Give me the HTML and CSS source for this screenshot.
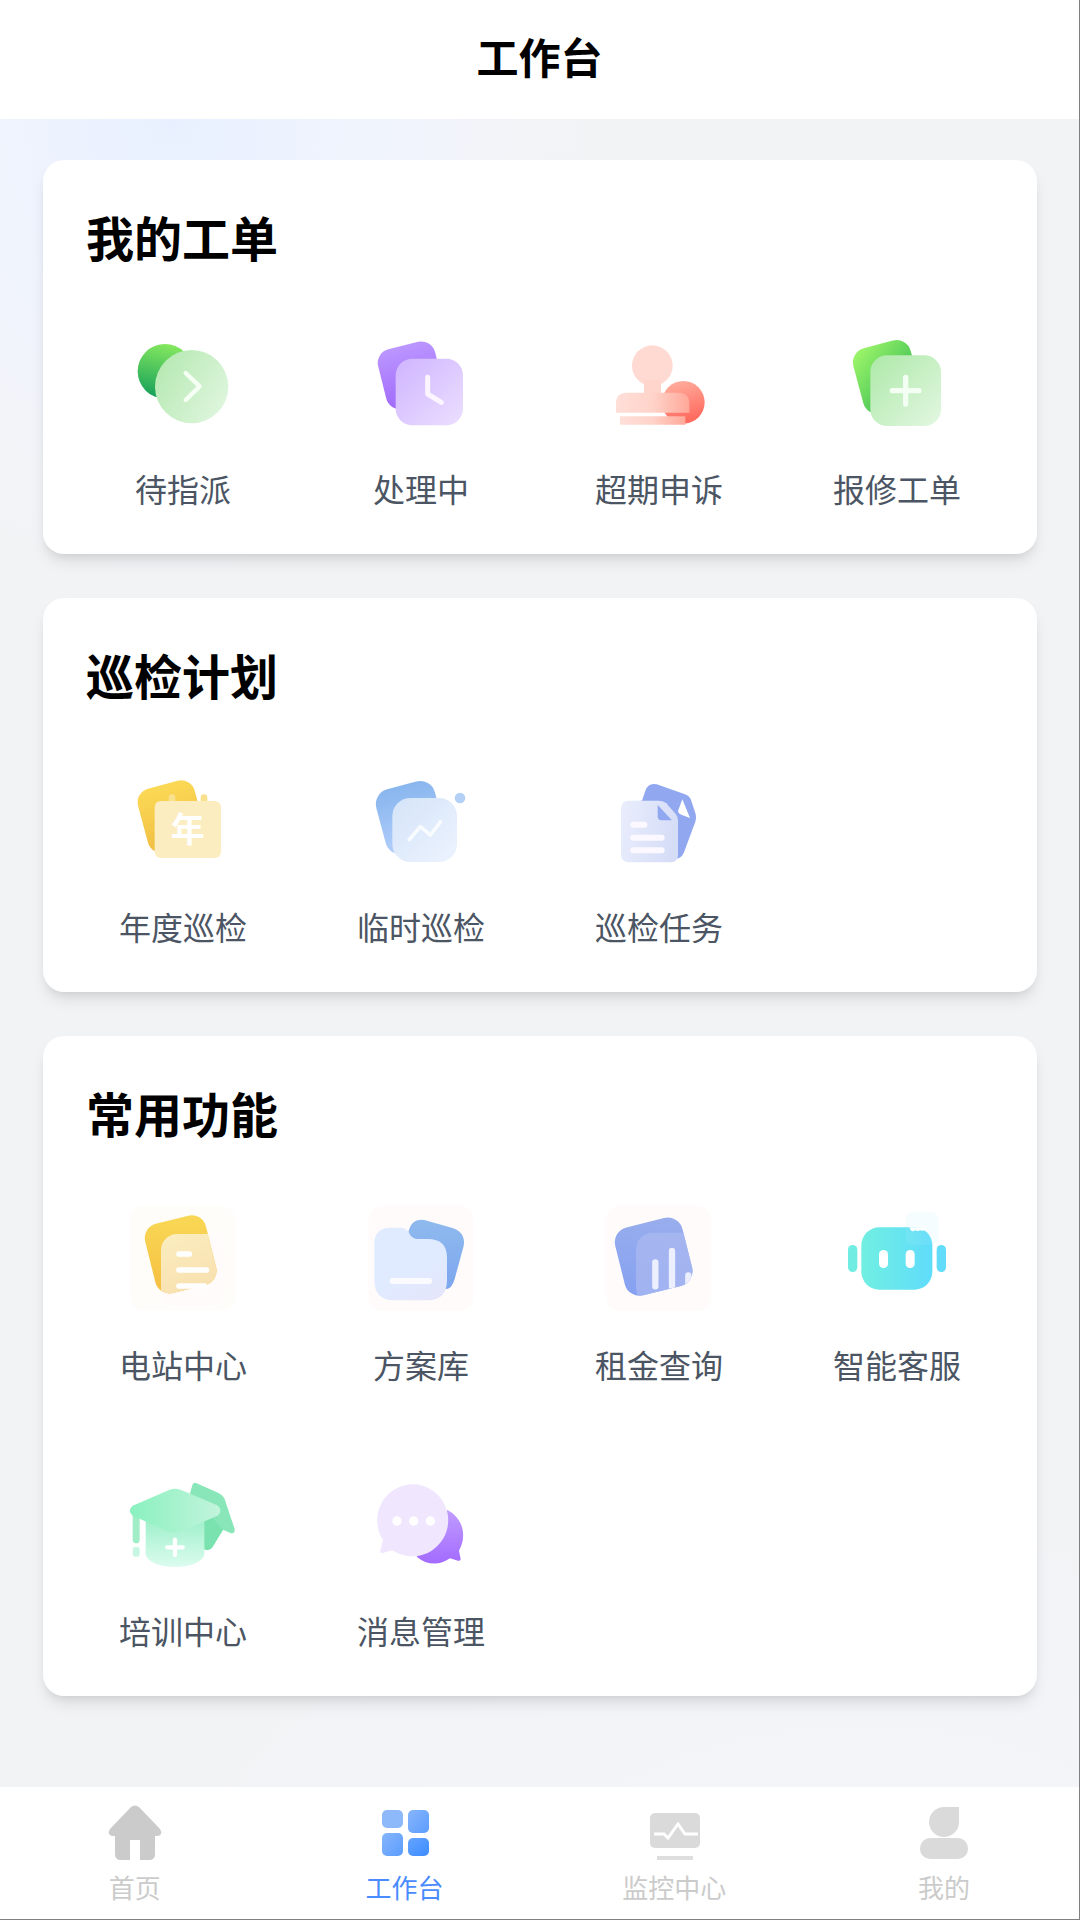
FILE: index.html
```html
<!DOCTYPE html>
<html lang="zh-CN">
<head>
<meta charset="utf-8">
<meta name="viewport" content="width=device-width, initial-scale=1">
<title>工作台</title>
<link rel="stylesheet" href="styles.css">
</head>
<body>
<div class="app">
  <header class="topbar"><h1 class="topbar-title">工作台</h1></header>

  <main class="content">
    <section class="card">
      <h2 class="card-title">我的工单</h2>
      <div class="grid">
        <a class="item" href="#assign">
          <svg class="item-icon" viewBox="57 24 324 324" aria-hidden="true">
            <defs>
              <linearGradient id="a1" x1=".6" y1="0" x2=".4" y2="1"><stop stop-color="#86e95f"/><stop offset="1" stop-color="#16a05a"/></linearGradient>
              <linearGradient id="a2" x1="0" y1=".2" x2="1" y2=".8"><stop stop-color="#b5e9b1"/><stop offset="1" stop-color="#e0f6df"/></linearGradient>
            </defs>
            <circle cx="165" cy="154" r="82" fill="url(#a1)"/>
            <circle cx="245" cy="200" r="110" fill="url(#a2)"/>
            <path d="M227 159l42 40-42 41" fill="none" stroke="#f6fff4" stroke-width="13" stroke-linecap="round" stroke-linejoin="round"/>
          </svg>
          <span class="item-label">待指派</span>
        </a>
        <a class="item" href="#processing">
          <svg class="item-icon" viewBox="771 24 324 324" aria-hidden="true">
            <defs>
              <linearGradient id="b1" x1="0" y1="0" x2="0" y2="1"><stop stop-color="#bb96ff"/><stop offset="1" stop-color="#a069fb"/></linearGradient>
              <linearGradient id="b2" x1="0" y1="0" x2="1" y2="1"><stop stop-color="#cfb4ff"/><stop offset="1" stop-color="#ecdfff"/></linearGradient>
            </defs>
            <rect x="814" y="74" width="176" height="184" rx="42" fill="url(#b1)" transform="rotate(-14 902 166)"/>
            <rect x="857" y="116" width="202" height="200" rx="50" fill="url(#b2)"/>
            <path d="M953 172v50l41 25" fill="none" stroke="#fbf5ff" stroke-width="15" stroke-linecap="round" stroke-linejoin="round"/>
          </svg>
          <span class="item-label">处理中</span>
        </a>
        <a class="item" href="#appeal">
          <svg class="item-icon" viewBox="45 24 324 324" aria-hidden="true">
            <defs>
              <linearGradient id="c1" x1="0" y1="0" x2=".3" y2="1"><stop stop-color="#ffb4a4"/><stop offset="1" stop-color="#ff6c60"/></linearGradient>
              <linearGradient id="c2" x1="0" y1="0" x2="1" y2="0"><stop stop-color="#ffdfd9"/><stop offset=".5" stop-color="#ffd3c9"/><stop offset="1" stop-color="#ffa899"/></linearGradient>
            </defs>
            <circle cx="280" cy="247" r="64" fill="url(#c1)"/>
            <path d="M90 278h128l6 10H90z" fill="#fff"/>
            <circle cx="187" cy="137" r="61" fill="#ffdad3"/>
            <path d="M162 180h51v42h-51z" fill="#ffd5cc"/>
            <path d="M78 278v-28q0-32 32-32h156q32 0 32 32v28z" fill="url(#c2)"/>
            <path d="M90 289h196v25H90z" fill="url(#c2)"/>
          </svg>
          <span class="item-label">超期申诉</span>
        </a>
        <a class="item" href="#repair">
          <svg class="item-icon" viewBox="759 24 324 324" aria-hidden="true">
            <defs>
              <linearGradient id="d1" x1=".1" y1=".1" x2=".7" y2="1"><stop stop-color="#97f268"/><stop offset="1" stop-color="#2db552"/></linearGradient>
              <linearGradient id="d2" x1="0" y1="0" x2="1" y2="1"><stop stop-color="#ade9a8"/><stop offset="1" stop-color="#e3f7e2"/></linearGradient>
            </defs>
            <rect x="802" y="70" width="178" height="202" rx="44" fill="url(#d1)" transform="rotate(-15 891 171)"/>
            <rect x="841" y="106" width="212" height="212" rx="50" fill="url(#d2)"/>
            <path d="M947 172v80M907 212h80" fill="none" stroke="#f3fff2" stroke-width="16" stroke-linecap="round"/>
          </svg>
          <span class="item-label">报修工单</span>
        </a>
      </div>
    </section>

    <section class="card">
      <h2 class="card-title">巡检计划</h2>
      <div class="grid">
        <a class="item" href="#yearly">
          <svg class="item-icon" viewBox="57 18 324 324" aria-hidden="true">
            <defs><linearGradient id="e1" x1="0" y1="0" x2="0" y2="1"><stop stop-color="#fbd955"/><stop offset="1" stop-color="#f0bd42"/></linearGradient></defs>
            <rect x="96" y="71" width="176" height="198" rx="42" fill="url(#e1)" transform="rotate(-15 184 170)"/>
            <path d="M176 125v-12a10 10 0 0 1 20 0v12zM272 125v-12a10 10 0 0 1 20 0v12z" fill="#f8e08c"/>
            <rect x="134" y="123" width="199" height="171" rx="18" fill="#fcedc1"/>
            <text class="year-mark" x="233" y="247">年</text>
          </svg>
          <span class="item-label">年度巡检</span>
        </a>
        <a class="item" href="#temporary">
          <svg class="item-icon" viewBox="771 18 324 324" aria-hidden="true">
            <defs>
              <linearGradient id="f1" x1="0" y1="0" x2="0" y2="1"><stop stop-color="#88b6ee"/><stop offset="1" stop-color="#b3cffb"/></linearGradient>
              <linearGradient id="f2" x1="0" y1="0" x2="1" y2="1"><stop stop-color="#d4e4f8"/><stop offset="1" stop-color="#edf3ff"/></linearGradient>
            </defs>
            <rect x="810" y="73" width="182" height="200" rx="46" fill="url(#f1)" transform="rotate(-15 901 173)"/>
            <rect x="847" y="114" width="194" height="192" rx="54" fill="url(#f2)"/>
            <path d="M898 239l33-39 30 25 31-40" fill="none" stroke="#f8fcff" stroke-width="11" stroke-linecap="round" stroke-linejoin="round"/>
            <circle cx="1050" cy="114" r="16" fill="#b4d0f7"/>
          </svg>
          <span class="item-label">临时巡检</span>
        </a>
        <a class="item" href="#tasks">
          <svg class="item-icon" viewBox="45 18 324 324" aria-hidden="true">
            <defs><linearGradient id="g1" x1="0" y1=".4" x2="1" y2=".6"><stop stop-color="#e8ecfc"/><stop offset="1" stop-color="#d4dcf6"/></linearGradient></defs>
            <path d="M156 122l10-30q9-25 34-19l85 30q12 4 17 14l15 45q3 12-1 23l-34 92q-8 20-24 18l-60-60-50-113z" fill="#91a8f0"/>
            <path d="M277 118l23 56-26-10q-12-4-9-14z" fill="#fff"/>
            <path d="M117 122h90q14 0 22 8l28 32q7 8 7 20v103q0 22-22 22H117q-24 0-24-24V146q0-24 24-24z" fill="url(#g1)"/>
            <path d="M203 135l43 46h-31q-12 0-12-12z" fill="#91a8f0"/>
            <path d="M130 194h33M130 233h85M130 271h85" stroke="#fbf9ff" stroke-width="18" stroke-linecap="round"/>
          </svg>
          <span class="item-label">巡检任务</span>
        </a>
      </div>
    </section>

    <section class="card">
      <h2 class="card-title">常用功能</h2>
      <div class="grid">
        <a class="item" href="#stations">
          <svg class="item-icon" viewBox="57 42 324 324" aria-hidden="true">
            <defs>
              <linearGradient id="h1" x1="0" y1="0" x2="0" y2="1"><stop stop-color="#f9db58"/><stop offset="1" stop-color="#f5b93c"/></linearGradient>
              <linearGradient id="h2" x1="0" y1="0" x2=".4" y2="1"><stop stop-color="#fbeebf"/><stop offset="1" stop-color="#f8deae"/></linearGradient>
              <clipPath id="h3"><rect x="118" y="86" width="188" height="214" rx="44" transform="rotate(-14 212 193)"/></clipPath>
            </defs>
            <rect x="60" y="47" width="316" height="316" rx="44" fill="#fffdf9"/>
            <rect x="153" y="132" width="191" height="214" rx="48" fill="#fefbfa"/>
            <g clip-path="url(#h3)">
              <path d="M60 47h316v316H60z" fill="url(#h1)"/>
              <rect x="153" y="132" width="191" height="214" rx="48" fill="url(#h2)"/>
            </g>
            <path d="M207 192h31M207 240h82M207 288h76" stroke="#fff" stroke-width="17" stroke-linecap="round"/>
          </svg>
          <span class="item-label">电站中心</span>
        </a>
        <a class="item" href="#plans">
          <svg class="item-icon" viewBox="771 42 324 324" aria-hidden="true">
            <defs>
              <linearGradient id="i1" x1="0" y1="0" x2="0" y2="1"><stop stop-color="#8fbaee"/><stop offset="1" stop-color="#7ca6ee"/></linearGradient>
              <linearGradient id="i2" x1=".5" y1=".6" x2=".8" y2="1.2"><stop stop-color="#e0ebff"/><stop offset="1" stop-color="#e6e3fa"/></linearGradient>
            </defs>
            <rect x="775" y="47" width="316" height="316" rx="44" fill="#fffbfa"/>
            <path d="M895 128q8-43 48-38l82 23q43 13 36 55l-27 99q-8 30-28 31l-60-50z" fill="url(#i1)"/>
            <path d="M842 113h30q15 0 23 12l6 11q8 11 22 11h30q58 0 58 56v68q0 60-58 60H852q-59 0-59-60V162q0-49 49-49z" fill="url(#i2)"/>
            <path d="M848 273h109" stroke="#fafaff" stroke-width="18" stroke-linecap="round"/>
          </svg>
          <span class="item-label">方案库</span>
        </a>
        <a class="item" href="#rent">
          <svg class="item-icon" viewBox="45 42 324 324" aria-hidden="true">
            <defs>
              <linearGradient id="j1" x1=".5" y1="0" x2=".4" y2="1"><stop stop-color="#9aafec"/><stop offset="1" stop-color="#839ff2"/></linearGradient>
              <clipPath id="j2"><rect x="87" y="95" width="208" height="210" rx="46" transform="rotate(-14 191 200)"/></clipPath>
            </defs>
            <rect x="48" y="47" width="316" height="316" rx="44" fill="#fffbfa"/>
            <g clip-path="url(#j2)">
              <path d="M48 47h316v316H48z" fill="url(#j1)"/>
              <rect x="138" y="128" width="216" height="216" rx="50" fill="#aab8f0" opacity=".75"/>
              <path d="M196 217v72M246 183v106M295 256v32" stroke="#eceffe" stroke-width="19" stroke-linecap="round"/>
            </g>
          </svg>
          <span class="item-label">租金查询</span>
        </a>
        <a class="item" href="#service">
          <svg class="item-icon" viewBox="759 42 324 324" aria-hidden="true">
            <defs><linearGradient id="k1" x1="0" y1="0" x2="1" y2="0"><stop stop-color="#71efe1"/><stop offset="1" stop-color="#5fdcfb"/></linearGradient></defs>
            <rect x="774" y="165" width="28" height="81" rx="14" fill="#70ece2"/>
            <rect x="1040" y="165" width="28" height="81" rx="14" fill="#62dcf8"/>
            <rect x="947" y="66" width="98" height="98" rx="22" fill="#f5fdff"/>
            <rect x="814" y="112" width="213" height="187" rx="54" fill="url(#k1)"/>
            <path d="M947 112h26q54 0 54 52h-58q-22 0-22-22z" fill="#fff" opacity=".08"/>
            <path d="M958 112h48q0 12-10 10-6-2-9 0-9 2-11-2-8 8-14 0z" fill="#fbffff"/>
            <rect x="867" y="180" width="27" height="54" rx="13" fill="#fff"/>
            <rect x="947" y="180" width="27" height="54" rx="13" fill="#fff"/>
          </svg>
          <span class="item-label">智能客服</span>
        </a>
        <a class="item" href="#training">
          <svg class="item-icon" viewBox="57 30 324 324" aria-hidden="true">
            <defs>
              <linearGradient id="l1" x1="0" y1="0" x2="1" y2="0"><stop stop-color="#8af1bf"/><stop offset="1" stop-color="#c2f4dc"/></linearGradient>
              <linearGradient id="l2" x1="0" y1="0" x2="0" y2="1"><stop stop-color="#9aefc8"/><stop offset="1" stop-color="#dcfcef"/></linearGradient>
            </defs>
            <path d="M240 100l8-27q3-6 10-4l66 29q12 5 19 17l31 92q1 16-13 12l-22-10-32 53q-8 12-25 6v-90z" fill="#88e6b8"/>
            <path d="M283 180l25-5 31 34-32 53q-8 12-24 6z" fill="#79e2af"/>
            <path d="M107 170h176v115c-15 48-161 48-176 0z" fill="url(#l2)"/>
            <path d="M68 160h21v79q0 11-10 11t-11-11z" fill="#a0edc8"/>
            <rect x="68" y="261" width="21" height="29" rx="9" fill="#c7f7e2"/>
            <path d="M68 137l111-48q17-6 33 0l110 47q17 13 3 30l-107 47q-24 10-46 0L68 167q-17-15 0-30z" fill="url(#l1)"/>
            <path d="M195 239v46M172 262h46" stroke="#fff" stroke-width="13" stroke-linecap="round"/>
          </svg>
          <span class="item-label">培训中心</span>
        </a>
        <a class="item" href="#messages">
          <svg class="item-icon" viewBox="771 30 324 324" aria-hidden="true">
            <defs><linearGradient id="m1" x1="0" y1="0" x2="0" y2="1"><stop stop-color="#c09cff"/><stop offset="1" stop-color="#a36bff"/></linearGradient></defs>
            <path d="M1012 150c47 24 60 78 35 122l5 25q0 7-8 5l-24-7c-33 23-70 20-100-5z" fill="url(#m1)"/>
            <path d="M910 73a108 108 0 1 1-63 198l-29 8q-9 1-7-8l8-31A108 108 0 0 1 910 73z" fill="#f0e7ff"/>
            <g fill="#fff"><circle cx="861" cy="183" r="14"/><circle cx="911" cy="183" r="14"/><circle cx="961" cy="183" r="14"/></g>
          </svg>
          <span class="item-label">消息管理</span>
        </a>
      </div>
    </section>
  </main>

  <nav class="tabbar" aria-label="主导航">
    <a class="tab" href="#home">
      <svg class="tab-icon" viewBox="0 0 60 60" aria-hidden="true"><path d="M26 4q4-3 8 0l21 22q2 3 1 5-1 2-4 2h-2v18q0 6-6 6h-9V37H25v20h-9q-6 0-6-6V33H8q-3 0-4-2-1-2 1-5z" fill="#cbcbcb"/></svg>
      <span>首页</span>
    </a>
    <a class="tab tab-active" href="#workbench" aria-current="page">
      <svg class="tab-icon" viewBox="0 0 60 60" aria-hidden="true">
        <defs>
          <linearGradient id="n1" x1="0" y1="0" x2="1" y2="1"><stop stop-color="#87b5fa"/><stop offset="1" stop-color="#5b9dff"/></linearGradient>
          <linearGradient id="n2" x1="0" y1="0" x2="1" y2="1"><stop stop-color="#64a5ff"/><stop offset="1" stop-color="#3d8bff"/></linearGradient>
        </defs>
        <rect x="7" y="7" width="21" height="18" rx="5" fill="#8db8fa"/>
        <rect x="33" y="7" width="21" height="23" rx="5" fill="url(#n1)"/>
        <rect x="7" y="30" width="21" height="23" rx="5" fill="url(#n1)"/>
        <rect x="33" y="35" width="21" height="18" rx="5" fill="url(#n2)"/>
      </svg>
      <span>工作台</span>
    </a>
    <a class="tab" href="#monitor">
      <svg class="tab-icon" viewBox="0 0 60 60" aria-hidden="true">
        <rect x="6" y="10" width="50" height="35" rx="5" fill="#dadada"/>
        <path d="M10 31h10l4 4 10-14 7 10h13" fill="none" stroke="#fff" stroke-width="3"/>
        <path d="M13 55h36" stroke="#dedede" stroke-width="4"/>
      </svg>
      <span>监控中心</span>
    </a>
    <a class="tab" href="#me">
      <svg class="tab-icon" viewBox="0 0 60 60" aria-hidden="true" fill="#dadada">
        <path d="M30 4h15v14a15 15 0 1 1-15-14z"/>
        <rect x="6" y="35" width="48" height="21" rx="10"/>
      </svg>
      <span>我的</span>
    </a>
  </nav>
</div>
</body>
</html>
```
FILE: styles.css
```css
* {
  box-sizing: border-box;
}

body {
  margin: 0;
  font-family: "Noto Sans CJK SC", sans-serif;
  color: #000;
}

.app {
  display: flex;
  flex-direction: column;
  min-height: 100vh;
  border-right: 1px solid #808080;
  border-bottom: 1px solid #808080;
  background:
    radial-gradient(ellipse 420px 460px at 16% 120px, #e8f0ff 0%, #f0f4fd 45%, rgba(242, 243, 245, 0) 100%),
    radial-gradient(ellipse 700px 400px at 80% 100%, #f4f6fb 0%, rgba(242, 243, 245, 0) 100%),
    #f2f3f5;
}

.topbar {
  padding: 24px 0 31px;
  background: #fff;
  text-align: center;
}

.topbar-title {
  margin: 0;
  font-size: 42px;
  font-weight: 700;
  line-height: 64px;
}

.content {
  display: flex;
  flex: 1;
  flex-direction: column;
  gap: 44px;
  padding: 41px 42px 44px 43px;
}

.card {
  padding: 40px 21px 0;
  border-radius: 21px;
  background: #fff;
  box-shadow:
    0 10px 16px -3px rgba(0, 0, 0, 0.1),
    0 5px 10px -5px rgba(0, 0, 0, 0.1);
}

.card-title {
  margin: 0 0 16px;
  padding: 0 22px;
  font-size: 48px;
  font-weight: 700;
  line-height: 72px;
}

.grid {
  display: grid;
  grid-template-columns: repeat(4, 1fr);
}

.item {
  display: flex;
  flex-direction: column;
  align-items: center;
  gap: 28px;
  padding: 40px 0 42px;
  color: #4b5563;
  text-decoration: none;
}

.item-icon {
  width: 108px;
  height: 108px;
}

.item-label {
  font-size: 32px;
  line-height: 48px;
}

.year-mark {
  font-size: 102px;
  font-weight: 700;
  text-anchor: middle;
  fill: #fff;
}

.tabbar {
  display: grid;
  grid-template-columns: repeat(4, 1fr);
  background: #fff;
}

.tab {
  display: flex;
  flex-direction: column;
  align-items: center;
  gap: 6px;
  padding: 16px 0 14px;
  color: #cbcbcb;
  font-size: 26px;
  line-height: 36px;
  text-decoration: none;
}

.tab-active {
  color: #4a8cff;
}

.tab-icon {
  width: 60px;
  height: 60px;
}
```
